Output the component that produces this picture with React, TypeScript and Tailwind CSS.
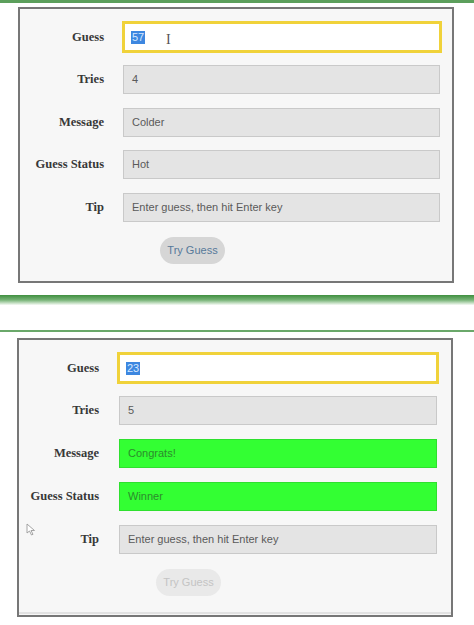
import React from "react";

type Field = {
  label: string;
  value: string;
  tone?: "gray" | "green";
};

const serif = "font-['Liberation_Serif',serif]";
const sans = "font-['Liberation_Sans',Arial,sans-serif]";

function Label({ text, wide }: { text: string; wide: boolean }) {
  return (
    <div
      className={`${serif} ${wide ? "w-[84px] mr-[19px]" : "w-[80px] mr-[20px]"} shrink-0 text-right text-[12.5px] font-bold text-[#383838]`}
    >
      {text}
    </div>
  );
}

function ReadOnlyBox({ value, tone = "gray", wide }: { value: string; tone?: "gray" | "green"; wide: boolean }) {
  const color =
    tone === "green"
      ? "bg-[#33ff33] border-[#2ee02e] text-[#2c8c2c]"
      : "bg-[#e4e4e4] border-[#c9c9c9] text-[#5a5a5a]";
  return (
    <div
      className={`${sans} ${color} ${wide ? "w-[317px]" : "w-[318px]"} h-[29px] border flex items-center pl-[8px] text-[11px]`}
    >
      {value}
    </div>
  );
}

function GuessPanel({
  guess,
  fields,
  wide,
  disabled,
  showBeam,
}: {
  guess: string;
  fields: Field[];
  wide: boolean;
  disabled: boolean;
  showBeam: boolean;
}) {
  return (
    <div
      className={`${wide ? "ml-[18px] h-[276px]" : "ml-[17px] h-[279px]"} w-[436px] border-2 border-[#777] bg-[#f7f7f7] pt-[12px] flex flex-col`}
    >
      <div className="flex items-center">
        <Label text="Guess" wide={wide} />
        <div
          className={`${sans} ${wide ? "-ml-px w-[320px]" : "-ml-[2px] w-[322px]"} relative h-[32px] bg-white border-[3px] border-[#f0d23a] flex items-center pl-[6px] text-[11px]`}
        >
          <span className="bg-[#3d87e0] text-[#d6e8ff] px-px leading-[13px]">{guess}</span>
          {showBeam && (
            <span className={`${serif} absolute left-[41px] top-[5px] text-[14px] text-[#555]`}>I</span>
          )}
        </div>
      </div>

      <div className={`flex flex-col mt-[12px] ${wide ? "gap-[13.5px]" : "gap-[14px]"}`}>
        {fields.map((f) => (
          <div key={f.label} className="flex items-center">
            <Label text={f.label} wide={wide} />
            <ReadOnlyBox value={f.value} tone={f.tone} wide={wide} />
          </div>
        ))}
      </div>

      <div className={`flex mt-[15px] ${wide ? "pl-[140px]" : "pl-[137px]"}`}>
        <button
          className={`${sans} w-[65px] h-[27px] rounded-full text-[11px] ${
            disabled ? "bg-[#e9e9e9] text-[#c4c4c4]" : "bg-[#d6d6d6] text-[#56799a]"
          }`}
        >
          Try Guess
        </button>
      </div>

      {!wide && <div className="mt-auto mb-px h-[2px] bg-[#e2e2e2]" />}
    </div>
  );
}

export default function App() {
  const first: Field[] = [
    { label: "Tries", value: "4" },
    { label: "Message", value: "Colder" },
    { label: "Guess Status", value: "Hot" },
    { label: "Tip", value: "Enter guess, then hit Enter key" },
  ];
  const second: Field[] = [
    { label: "Tries", value: "5" },
    { label: "Message", value: "Congrats!", tone: "green" },
    { label: "Guess Status", value: "Winner", tone: "green" },
    { label: "Tip", value: "Enter guess, then hit Enter key" },
  ];

  return (
    <div className="relative w-[474px] h-[625px] bg-white overflow-hidden">
      <div className="h-[3px] bg-[#5c9f5c]" />
      <div className="mt-[4px]">
        <GuessPanel guess="57" fields={first} wide disabled={false} showBeam />
      </div>
      <div className="mt-[12px] h-[10px] bg-linear-to-b from-[#3f8f3f] via-[#77b377] to-[#f6fbf6]" />
      <div className="mt-[25px] h-[2px] bg-[#6aa86a]" />
      <div className="mt-[6px]">
        <GuessPanel guess="23" fields={second} wide={false} disabled showBeam={false} />
      </div>

      {/* mouse pointer left in the capture */}
      <svg className="absolute left-[26px] top-[523px]" width="10" height="13" viewBox="0 0 10 13">
        <path d="M1 1 L1 10 L3.5 8 L5.5 12 L7 11.3 L5 7.5 L8.5 7.5 Z" fill="#fff" stroke="#9a9a9a" strokeWidth="0.9" />
      </svg>
    </div>
  );
}
